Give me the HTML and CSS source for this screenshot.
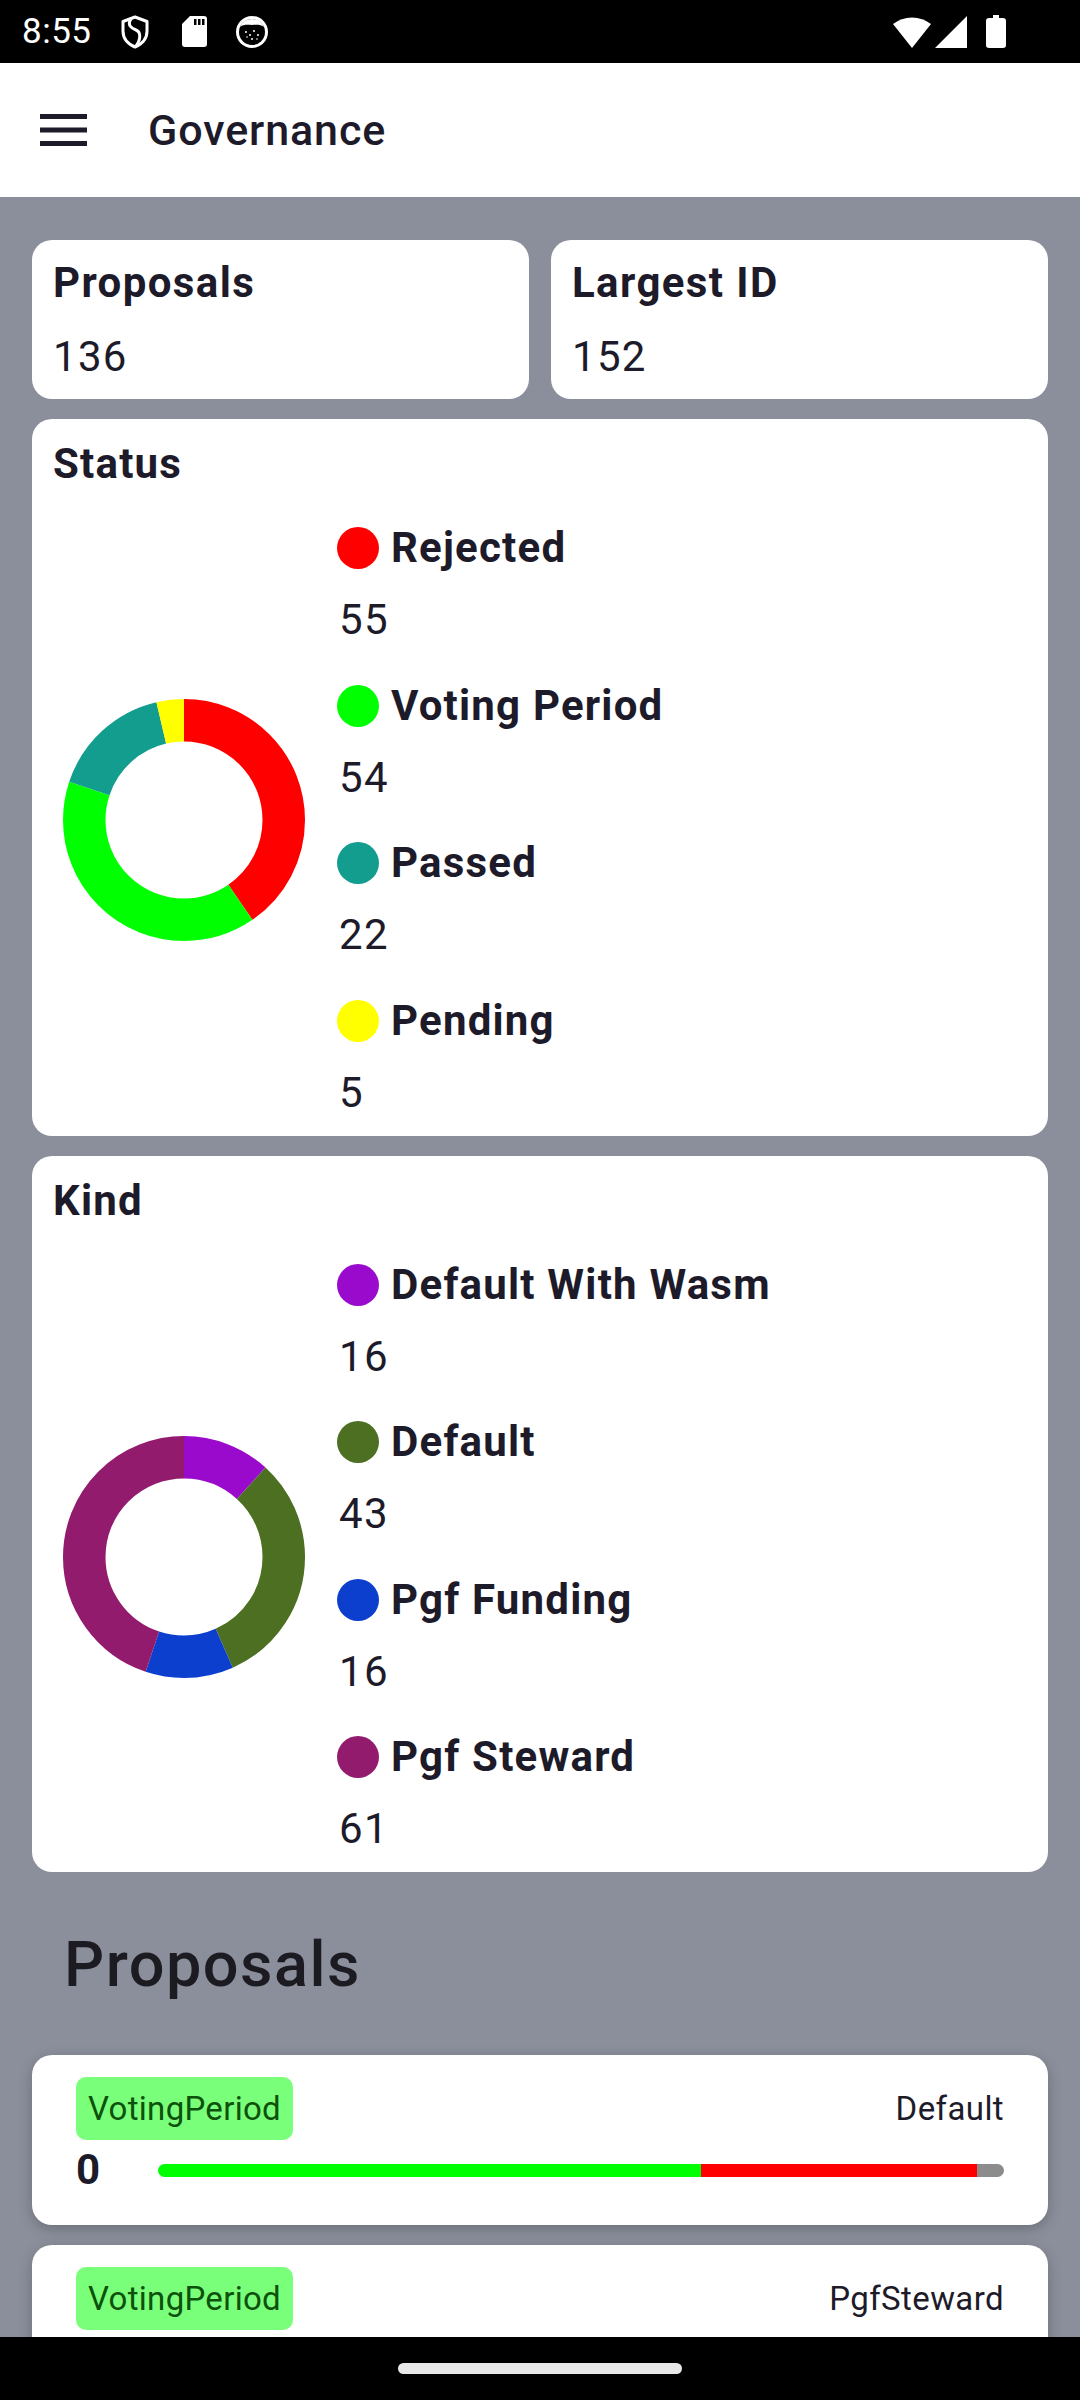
FILE: index.html
```html
<!DOCTYPE html>
<html>
<head>
<meta charset="utf-8">
<link rel="stylesheet" href="styles.css">
</head>
<body>
<div class="screen">
  <div class="statusbar">
    <span class="time">8:55</span>
    <svg class="sb-shield" width="30" height="34" viewBox="0 0 30 34">
      <path d="M15 2 L27 6.5 V16 C27 24 22 29 15 32 C8 29 3 24 3 16 V6.5 Z" fill="none" stroke="#fff" stroke-width="3" stroke-linejoin="round"/>
      <path d="M11 4 C7 10 11 13 16 15 C21 17 21 24 16 31" fill="none" stroke="#fff" stroke-width="3"/>
    </svg>
    <svg class="sb-sd" width="25" height="31" viewBox="0 0 25 31">
      <path d="M8 0 H22 a3 3 0 0 1 3 3 V28 a3 3 0 0 1 -3 3 H3 a3 3 0 0 1 -3 -3 V8 Z" fill="#fff"/>
      <rect x="12" y="3" width="2.5" height="6" fill="#000"/>
      <rect x="16" y="3" width="2.5" height="6" fill="#000"/>
      <rect x="20" y="3" width="2.5" height="6" fill="#000"/>
    </svg>
    <svg class="sb-face" width="32" height="32" viewBox="0 0 32 32">
      <circle cx="16" cy="16" r="16" fill="#fff"/>
      <circle cx="16" cy="16" r="13" fill="#000"/>
      <path d="M4 11 A13 13 0 0 1 28 11 C24 8 20 9 16 9 C12 9 8 8 4 11 Z" fill="#fff"/>
      <circle cx="10" cy="16" r="1" fill="#fff"/>
      <circle cx="14" cy="19" r="1" fill="#fff"/>
      <circle cx="18" cy="15" r="1" fill="#fff"/>
      <circle cx="22" cy="19" r="1" fill="#fff"/>
      <circle cx="16" cy="23" r="1" fill="#fff"/>
      <circle cx="11" cy="21" r="0.8" fill="#fff"/>
      <circle cx="21" cy="23" r="0.8" fill="#fff"/>
    </svg>
    <span class="sb-spacer"></span>
    <svg class="sb-wifi" width="38" height="32" viewBox="0 0 38 32">
      <path d="M19 32 L0 8 A30.6 30.6 0 0 1 38 8 Z" fill="#fff"/>
    </svg>
    <svg class="sb-signal" width="32" height="32" viewBox="0 0 32 32">
      <path d="M0 32 L32 32 L32 0 Z" fill="#fff"/>
    </svg>
    <svg class="sb-battery" width="20" height="33" viewBox="0 0 20 33">
      <rect x="7" y="0" width="6" height="4" fill="#fff"/>
      <rect x="0" y="3" width="20" height="30" rx="3" fill="#fff"/>
    </svg>
  </div>

  <header class="appbar">
    <svg class="menu-icon" width="47" height="32" viewBox="0 0 47 32">
      <rect x="0" y="0" width="47" height="5" fill="#1d1b2a"/>
      <rect x="0" y="13.5" width="47" height="5" fill="#1d1b2a"/>
      <rect x="0" y="27" width="47" height="5" fill="#1d1b2a"/>
    </svg>
    <h1 class="appbar-title">Governance</h1>
  </header>

  <main class="content">
    <div class="stats-row">
      <div class="stat-card">
        <div class="stat-title">Proposals</div>
        <div class="stat-value">136</div>
      </div>
      <div class="stat-card">
        <div class="stat-title">Largest ID</div>
        <div class="stat-value">152</div>
      </div>
    </div>

    <section class="chart-card">
      <div class="chart-title">Status</div>
      <div class="chart-body">
        <svg class="donut" width="262" height="262" viewBox="0 0 262 262">
          <g transform="rotate(-90 131 131)" fill="none" stroke-width="42.5">
            <circle cx="131" cy="131" r="99.75" pathLength="136" stroke="#ff0000" stroke-dasharray="55 81" stroke-dashoffset="0"/>
            <circle cx="131" cy="131" r="99.75" pathLength="136" stroke="#00ff00" stroke-dasharray="54 82" stroke-dashoffset="-55"/>
            <circle cx="131" cy="131" r="99.75" pathLength="136" stroke="#129d8f" stroke-dasharray="22 114" stroke-dashoffset="-109"/>
            <circle cx="131" cy="131" r="99.75" pathLength="136" stroke="#ffff00" stroke-dasharray="5 131" stroke-dashoffset="-131"/>
          </g>
        </svg>
        <div class="legend">
          <div class="legend-item">
            <div class="legend-label"><span class="dot dot-rejected"></span>Rejected</div>
            <div class="legend-value">55</div>
          </div>
          <div class="legend-item">
            <div class="legend-label"><span class="dot dot-voting"></span>Voting Period</div>
            <div class="legend-value">54</div>
          </div>
          <div class="legend-item">
            <div class="legend-label"><span class="dot dot-passed"></span>Passed</div>
            <div class="legend-value">22</div>
          </div>
          <div class="legend-item">
            <div class="legend-label"><span class="dot dot-pending"></span>Pending</div>
            <div class="legend-value">5</div>
          </div>
        </div>
      </div>
    </section>

    <section class="chart-card">
      <div class="chart-title">Kind</div>
      <div class="chart-body">
        <svg class="donut" width="262" height="262" viewBox="0 0 262 262">
          <g transform="rotate(-90 131 131)" fill="none" stroke-width="42.5">
            <circle cx="131" cy="131" r="99.75" pathLength="136" stroke="#9a0acd" stroke-dasharray="16 120" stroke-dashoffset="0"/>
            <circle cx="131" cy="131" r="99.75" pathLength="136" stroke="#4d6f22" stroke-dasharray="43 93" stroke-dashoffset="-16"/>
            <circle cx="131" cy="131" r="99.75" pathLength="136" stroke="#0d3fce" stroke-dasharray="16 120" stroke-dashoffset="-59"/>
            <circle cx="131" cy="131" r="99.75" pathLength="136" stroke="#931b6e" stroke-dasharray="61 75" stroke-dashoffset="-75"/>
          </g>
        </svg>
        <div class="legend">
          <div class="legend-item">
            <div class="legend-label"><span class="dot dot-wasm"></span>Default With Wasm</div>
            <div class="legend-value">16</div>
          </div>
          <div class="legend-item">
            <div class="legend-label"><span class="dot dot-default"></span>Default</div>
            <div class="legend-value">43</div>
          </div>
          <div class="legend-item">
            <div class="legend-label"><span class="dot dot-funding"></span>Pgf Funding</div>
            <div class="legend-value">16</div>
          </div>
          <div class="legend-item">
            <div class="legend-label"><span class="dot dot-steward"></span>Pgf Steward</div>
            <div class="legend-value">61</div>
          </div>
        </div>
      </div>
    </section>

    <h2 class="section-title">Proposals</h2>

    <div class="proposal-card">
      <div class="proposal-top">
        <span class="badge">VotingPeriod</span>
        <span class="proposal-kind">Default</span>
      </div>
      <div class="proposal-bottom">
        <span class="proposal-id">0</span>
        <div class="vote-bar">
          <span class="seg seg-yes" style="width:64.2%"></span>
          <span class="seg seg-no" style="width:32.6%"></span>
          <span class="seg seg-abstain" style="width:3.2%"></span>
        </div>
      </div>
    </div>

    <div class="proposal-card">
      <div class="proposal-top">
        <span class="badge">VotingPeriod</span>
        <span class="proposal-kind">PgfSteward</span>
      </div>
    </div>
  </main>

  <div class="navbar"><div class="home-indicator"></div></div>
</div>
</body>
</html>
```

FILE: styles.css
```css
* { box-sizing: border-box; }

html, body {
  margin: 0;
  padding: 0;
  background: #000;
}

.screen {
  width: 1080px;
  height: 2400px;
  display: flex;
  flex-direction: column;
  overflow: hidden;
  font-family: Roboto, "Noto Sans", "Liberation Sans", sans-serif;
  color: #1d1b2a;
}

/* status bar */
.statusbar {
  height: 63px;
  flex: 0 0 63px;
  background: #000;
  display: flex;
  align-items: center;
  padding-left: 22px;
  padding-right: 74px;
}
.time {
  color: #fff;
  font-size: 35px;
  line-height: 40px;
  letter-spacing: 0.5px;
  width: 98px;
}
.sb-sd { margin-left: 32px; }
.sb-face { margin-left: 29px; }
.sb-spacer { flex: 1; }
.sb-signal { margin-left: 4px; }
.sb-battery { margin-left: 19px; }

/* app bar */
.appbar {
  height: 134px;
  flex: 0 0 134px;
  background: #fff;
  display: flex;
  align-items: center;
  padding-left: 40px;
}
.menu-icon { display: block; }
.appbar-title {
  margin: 0 0 0 61px;
  font-size: 43px;
  font-weight: 500;
  letter-spacing: 0.9px;
  line-height: 50px;
}

/* content */
.content {
  flex: 1;
  background: #8a8f9b;
  padding: 43px 32px 0;
  display: flex;
  flex-direction: column;
  gap: 20px;
  overflow: hidden;
}

.stats-row {
  display: grid;
  grid-template-columns: 1fr 1fr;
  gap: 22px;
}
.stat-card {
  background: #fff;
  border-radius: 20px;
  padding: 18px 21px 17px;
}
.stat-title {
  font-size: 42px;
  line-height: 50px;
  font-weight: 700;
  letter-spacing: 1.4px;
}
.stat-value {
  margin-top: 24px;
  font-size: 42px;
  line-height: 50px;
  letter-spacing: 1.3px;
}

.chart-card {
  background: #fff;
  border-radius: 20px;
  padding: 20px 21px 18px;
}
.chart-title {
  font-size: 42px;
  line-height: 50px;
  font-weight: 700;
  letter-spacing: 1.2px;
}
.chart-body {
  margin-top: 34px;
  display: flex;
  align-items: center;
}
.donut {
  flex: 0 0 262px;
  display: block;
}
.legend {
  margin-left: 22px;
  display: flex;
  flex-direction: column;
  gap: 35.5px;
}
.legend-label {
  display: flex;
  align-items: center;
  gap: 12px;
  font-size: 42px;
  line-height: 50px;
  font-weight: 700;
  letter-spacing: 1.2px;
}
.legend-value {
  margin-top: 22px;
  font-size: 42px;
  line-height: 50px;
  letter-spacing: 1.3px;
  padding-left: 2px;
}
.dot {
  width: 42px;
  height: 42px;
  border-radius: 50%;
  flex: 0 0 42px;
}
.dot-rejected { background: #ff0000; }
.dot-voting { background: #00ff00; }
.dot-passed { background: #129d8f; }
.dot-pending { background: #ffff00; }
.dot-wasm { background: #9a0acd; }
.dot-default { background: #4d6f22; }
.dot-funding { background: #0d3fce; }
.dot-steward { background: #931b6e; }

.section-title {
  margin: 35px 0 32px 32px;
  font-size: 63px;
  line-height: 76px;
  font-weight: 500;
  letter-spacing: 1.5px;
  color: #1c1b22;
}

.proposal-card {
  flex: 0 0 auto;
  background: #fff;
  border-radius: 20px;
  padding: 22px 44px 30px;
  box-shadow: 0 4px 14px rgba(0, 0, 0, 0.22);
}
.proposal-top {
  display: flex;
  align-items: center;
  justify-content: space-between;
}
.badge {
  display: flex;
  align-items: center;
  height: 63px;
  padding: 0 12px;
  border-radius: 10px;
  background: #7aff7a;
  color: #0c520c;
  font-size: 33px;
  letter-spacing: 0.3px;
}
.proposal-kind {
  font-size: 33px;
  letter-spacing: 0.4px;
}
.proposal-bottom {
  margin-top: 5px;
  display: flex;
  align-items: center;
  height: 50px;
}
.proposal-id {
  flex: 0 0 82px;
  font-size: 42px;
  line-height: 50px;
  font-weight: 700;
}
.vote-bar {
  flex: 1;
  height: 13px;
  border-radius: 7px;
  overflow: hidden;
  display: flex;
}
.seg { display: block; height: 100%; }
.seg-yes { background: #00ff00; }
.seg-no { background: #ff0000; }
.seg-abstain { background: #8c8c8c; }

/* nav bar */
.navbar {
  height: 63px;
  flex: 0 0 63px;
  background: #000;
  display: flex;
  align-items: center;
  justify-content: center;
}
.home-indicator {
  width: 284px;
  height: 11px;
  border-radius: 6px;
  background: #e8e8e8;
}
```
